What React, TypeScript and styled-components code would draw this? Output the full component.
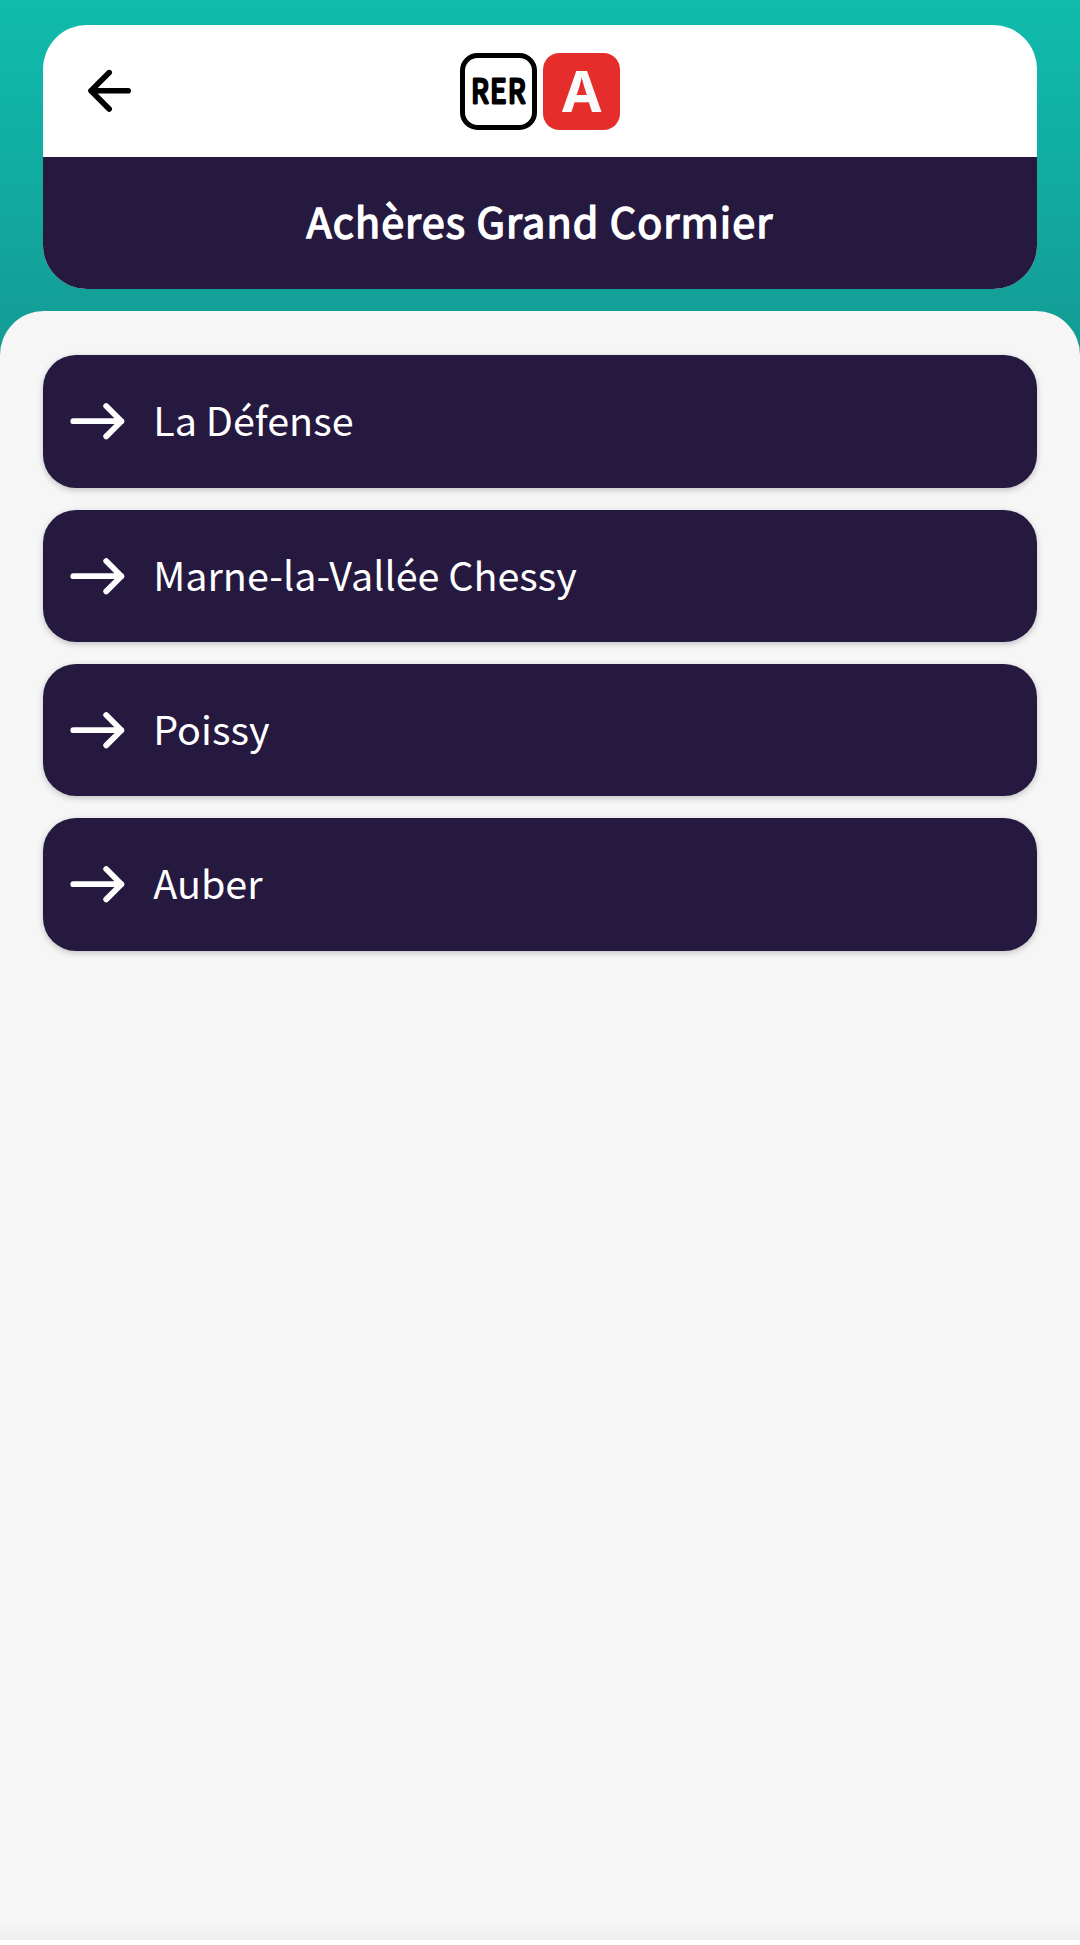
import React from "react";
import styled, { createGlobalStyle } from "styled-components";

const sans = `"Noto Sans CJK JP", "Noto Sans", sans-serif`;
const navy = "#251940";

const GlobalStyle = createGlobalStyle`
  body { margin: 0; background: #fff; }
  *, *::before, *::after { box-sizing: border-box; }
`;

const Screen = styled.main`
  height: 1945px;
  padding-top: 24.6px;
  display: flex;
  flex-direction: column;
  font-family: ${sans};
  background: linear-gradient(180deg, #10bcac 0, #139b95 355px, #fff 355px);
`;

const HeaderCard = styled.header`
  height: 264.7px;
  margin: 0 43.2px 22px;
  flex: none;
  border-radius: 44px;
  overflow: hidden;
  background: #fff;
`;

const TopBar = styled.div`
  height: 132.4px;
  padding: 1px 44px 0;
  display: grid;
  grid-template-columns: 1fr auto 1fr;
  align-items: center;
`;

const BackButton = styled.button`
  width: 46px;
  height: 46px;
  padding: 0;
  border: 0;
  background: none;
  color: #000;
`;

const LineBadges = styled.div`
  display: flex;
  gap: 6px;
`;

const Badge = styled.svg`
  display: block;
  width: 77px;
  height: 77px;
  overflow: visible;
`;

const Station = styled.h1`
  height: 132.3px;
  margin: 0;
  padding-bottom: 4px;
  display: flex;
  align-items: center;
  justify-content: center;
  background: ${navy};
  color: #fff;
  font-size: 41.3px;
  font-weight: 400;
  letter-spacing: 1.1px;
  line-height: 1;
  -webkit-text-stroke: 1.5px #fff;
`;

const Sheet = styled.section`
  height: 1628.7px;
  flex: none;
  padding: 44px 43.2px;
  border-radius: 44px 44px 0 0;
  background: linear-gradient(180deg, #f6f6f6 calc(100% - 20px), #eeeeee 100%);
`;

const Directions = styled.nav`
  display: flex;
  flex-direction: column;
  gap: 22px;
`;

const Direction = styled.button`
  height: 132.35px;
  padding: 0 26px;
  display: flex;
  align-items: center;
  gap: 26px;
  border: 0;
  border-radius: 33px;
  background: ${navy};
  color: #fff;
  box-shadow: 0 2px 6px rgba(0, 0, 0, 0.22);
  font-family: ${sans};
  font-size: 39.5px;
  line-height: 1;
  text-align: left;
`;

const Label = styled.span`
  padding-bottom: 5px;
  white-space: nowrap;
`;

const ForwardIcon = () => (
  <svg width="58" height="40" viewBox="0 0 58 40" fill="none" stroke="currentColor" strokeWidth="5.8" strokeLinecap="round" strokeLinejoin="round">
    <path d="M4.3 20.2H52.4M37.2 5 52.4 20.2 37.2 35.4" />
  </svg>
);

const BackIcon = () => (
  <svg width="46" height="46" viewBox="0 0 46 46" fill="none" stroke="currentColor" strokeWidth="5.6" strokeLinecap="round" strokeLinejoin="round">
    <path d="M41.2 22.8H4M22.2 4.6 4 22.8 22.2 41" />
  </svg>
);

const directions = ["La Défense", "Marne-la-Vallée Chessy", "Poissy", "Auber"];

export default function App() {
  return (
    <>
      <GlobalStyle />
      <Screen>
        <HeaderCard>
          <TopBar>
            <BackButton aria-label="Retour"><BackIcon /></BackButton>
            <LineBadges>
              <Badge viewBox="0 0 77 77">
                <rect x="2.5" y="2.5" width="72" height="72" rx="15" fill="#fff" stroke="#000" strokeWidth="5" />
                <text transform="translate(39.2 50.2) scale(0.84 1)" textAnchor="middle" fontFamily={sans} fontSize="32.5" letterSpacing="2" stroke="#000" strokeWidth="2.8" strokeLinejoin="round">RER</text>
              </Badge>
              <Badge viewBox="0 0 77 77">
                <rect width="77" height="77" rx="16.5" fill="#e52d2c" />
                <text x="38.7" y="58.7" textAnchor="middle" fontFamily={`"Noto Sans", sans-serif`} fontSize="57" fontWeight="700" fill="#fafafa">A</text>
              </Badge>
            </LineBadges>
          </TopBar>
          <Station>Achères Grand Cormier</Station>
        </HeaderCard>
        <Sheet>
          <Directions>
            {directions.map((name) => (
              <Direction key={name}>
                <ForwardIcon />
                <Label>{name}</Label>
              </Direction>
            ))}
          </Directions>
        </Sheet>
      </Screen>
    </>
  );
}
